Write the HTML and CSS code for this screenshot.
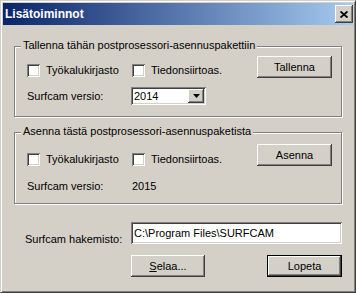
FILE: index.html
```html
<!DOCTYPE html>
<html lang="fi">
<head>
    <meta charset="UTF-8">
    <title>Lisätoiminnot</title>
    <link rel="stylesheet" href="styles.css">
</head>
<body>
<div class="window">
    <div class="titlebar">
        <span class="title">Lisätoiminnot</span>
        <span class="close">
            <svg width="8" height="7" viewBox="0 0 8 7">
                <path d="M0.5 0.5 L7.5 6.5 M7.5 0.5 L0.5 6.5" stroke="#000" stroke-width="1.8" fill="none"/>
            </svg>
        </span>
    </div>

    <div class="group save">
        <span class="caption">Tallenna tähän postprosessori-asennuspakettiin</span>
        <div class="top-row">
            <label class="check first"><span class="box"></span>Työkalukirjasto</label>
            <label class="check"><span class="box"></span>Tiedonsiirtoas.</label>
            <span class="btn">Tallenna</span>
        </div>
        <div class="version-row">
            <span class="field-label">Surfcam versio:</span>
            <span class="combo">
                <span class="combo-text">2014</span>
                <span class="combo-btn">
                    <svg width="7" height="4" viewBox="0 0 7 4"><path d="M0 0 H7 L3.5 4 Z" fill="#000"/></svg>
                </span>
            </span>
        </div>
    </div>

    <div class="group install">
        <span class="caption">Asenna tästä postprosessori-asennuspaketista</span>
        <div class="top-row">
            <label class="check first"><span class="box"></span>Työkalukirjasto</label>
            <label class="check"><span class="box"></span>Tiedonsiirtoas.</label>
            <span class="btn">Asenna</span>
        </div>
        <div class="version-row">
            <span class="field-label">Surfcam versio:</span>
            <span class="version-value">2015</span>
        </div>
    </div>

    <div class="dir-row">
        <span class="dir-label">Surfcam hakemisto:</span>
        <span class="input">C:\Program Files\SURFCAM</span>
    </div>

    <div class="button-row">
        <span class="btn browse"><u>S</u>elaa...</span>
        <span class="btn default">Lopeta</span>
    </div>
</div>
</body>
</html>
```

FILE: styles.css
```css
*{
    margin: 0;
    padding: 0;
    box-sizing: border-box;
}
html,body{
    background-color: #d4d0c8;
}
body{
    font: 11px "Liberation Sans", Arial, sans-serif;
    color: #000;
}

/* window frame */
.window{
    width: 356px;
    height: 293px;
    padding: 2px;
    border: 1px solid;
    border-color: #d4d0c8 #404040 #404040 #d4d0c8;
    box-shadow: inset 1px 1px #fff, inset -1px -1px #808080;
    background-color: #d4d0c8;
}

.titlebar{
    display: flex;
    align-items: center;
    height: 22px;
    padding-left: 2px;
    background: linear-gradient(to right, #0a246a, #a6caf0);
}
.title{
    color: #fff;
    font-weight: bold;
    font-size: 12px;
}
.close{
    display: flex;
    align-items: center;
    justify-content: center;
    margin-left: auto;
    width: 18px;
    height: 18px;
    background-color: #d4d0c8;
    box-shadow: inset -1px -1px #404040, inset 1px 1px #fff, inset -2px -2px #808080;
}

/* group boxes */
.group{
    position: relative;
    margin-left: 11px;
    width: 328px;
    border: 1px solid #808080;
    box-shadow: inset 1px 1px #fff, 1px 1px #fff;
}
.save{
    margin-top: 21px;
    height: 71px;
}
.install{
    margin-top: 15px;
    height: 72px;
}
.caption{
    position: absolute;
    top: -8px;
    left: 6px;
    padding: 0 2px;
    line-height: 13px;
    background-color: #d4d0c8;
}

.top-row{
    display: flex;
    align-items: flex-start;
    padding: 9px 0 0 12px;
}
.install .top-row{
    padding-top: 11px;
}
.check{
    display: flex;
    align-items: center;
    height: 13px;
    margin-top: 8px;
    line-height: 13px;
}
.install .check{
    margin-top: 9px;
}
.check.first{
    width: 105px;
}
.box{
    width: 13px;
    height: 13px;
    margin-right: 6px;
    background-color: #fff;
    box-shadow: inset 1px 1px #808080, inset -1px -1px #fff, inset 2px 2px #404040, inset -2px -2px #d4d0c8;
}

.btn{
    display: flex;
    align-items: center;
    justify-content: center;
    width: 75px;
    height: 22px;
    background-color: #d4d0c8;
    box-shadow: inset -1px -1px #404040, inset 1px 1px #fff, inset -2px -2px #808080;
}
.top-row .btn{
    margin-left: auto;
    margin-right: 9px;
}

.version-row{
    display: flex;
    align-items: center;
    padding-left: 12px;
    margin-top: 9px;
    line-height: 13px;
}
.install .version-row{
    margin-top: 14px;
}
.field-label{
    width: 104px;
}
.version-value{
    padding-left: 1px;
}

.combo{
    display: flex;
    align-items: center;
    width: 75px;
    height: 18px;
    padding: 2px;
    background-color: #fff;
    box-shadow: inset 1px 1px #808080, inset -1px -1px #fff, inset 2px 2px #404040, inset -2px -2px #d4d0c8;
}
.combo-text{
    flex: 1;
    padding-left: 1px;
}
.combo-btn{
    display: flex;
    align-items: center;
    justify-content: center;
    width: 16px;
    height: 14px;
    background-color: #d4d0c8;
    box-shadow: inset -1px -1px #404040, inset 1px 1px #fff, inset -2px -2px #808080;
}

/* directory and bottom buttons */
.dir-row{
    display: flex;
    align-items: flex-end;
    margin-top: 18px;
    padding-left: 22px;
}
.dir-label{
    width: 106px;
    line-height: 13px;
    margin-bottom: -2px;
}
.input{
    display: flex;
    align-items: center;
    width: 211px;
    height: 22px;
    padding-left: 3px;
    background-color: #fff;
    box-shadow: inset 1px 1px #808080, inset -1px -1px #fff, inset 2px 2px #404040, inset -2px -2px #d4d0c8;
}

.button-row{
    display: flex;
    margin-top: 11px;
    padding-left: 128px;
}
.browse{
    width: 74px;
}
.default{
    margin-left: auto;
    margin-right: 11px;
    border: 1px solid #000;
}
```
